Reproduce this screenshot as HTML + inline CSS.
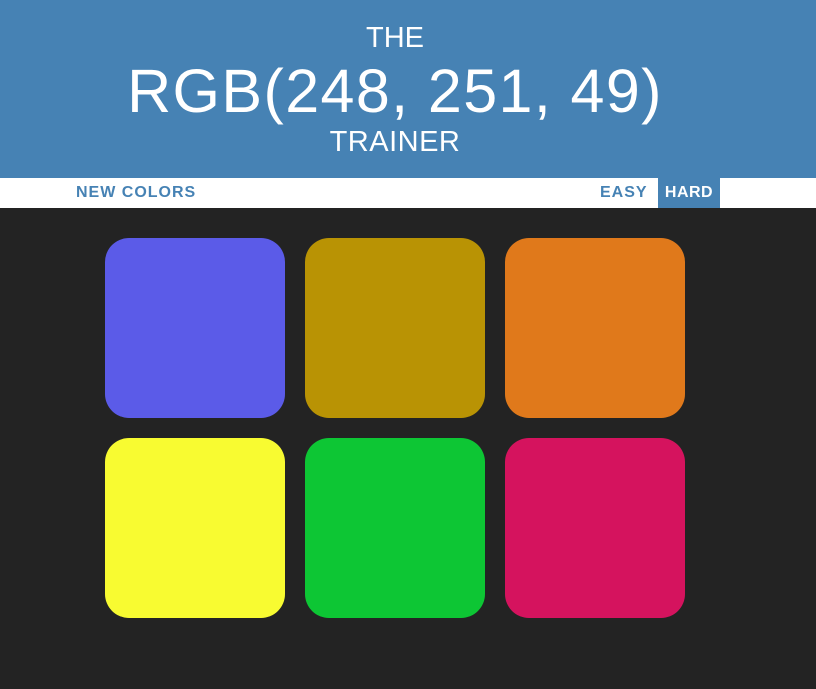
<!DOCTYPE html>
<html><head><style>
body{margin:0;background:#232323;width:816px;height:689px;overflow:hidden;font-family:"Liberation Sans",sans-serif}
.h{position:absolute;left:0;top:0;width:816px;height:178px;background:#4682b4;color:#fff;text-align:center}
.t{position:absolute;left:0;width:790px;white-space:nowrap}
.bar{position:absolute;top:178px;left:0;width:816px;height:30px;background:#fff}
.b{position:absolute;top:0;height:30px;line-height:30px;font-weight:bold;font-size:16px;letter-spacing:1px;color:#4682b4}
.sq{position:absolute;width:180px;height:180px;border-radius:24px}
</style></head><body>
<div class="h">
<div class="t" style="top:22px;font-size:29px">THE</div>
<div class="t" style="top:56px;font-size:61px;letter-spacing:1.4px">RGB(248, 251, 49)</div>
<div class="t" style="top:126px;font-size:29px;letter-spacing:0.5px">TRAINER</div>
</div>
<div class="bar">
<div class="b" style="left:76px">NEW COLORS</div>
<div class="b" style="left:600px">EASY</div>
<div class="b" style="left:658px;width:62px;background:#4682b4;color:#fff;text-align:center;letter-spacing:0.5px">HARD</div>
</div>
<div class="sq" style="left:105px;top:238px;background:#5b5be8"></div>
<div class="sq" style="left:305px;top:238px;background:#b99304"></div>
<div class="sq" style="left:505px;top:238px;background:#e0791b"></div>
<div class="sq" style="left:105px;top:438px;background:#f8fb31"></div>
<div class="sq" style="left:305px;top:438px;background:#0dc634"></div>
<div class="sq" style="left:505px;top:438px;background:#d5135e"></div>
</body></html>
